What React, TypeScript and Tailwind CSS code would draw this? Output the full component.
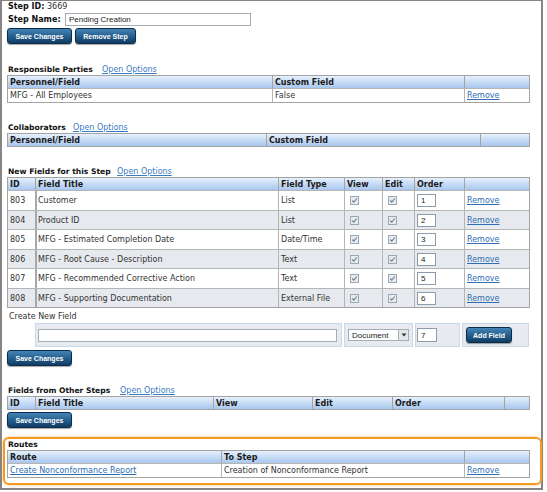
import React from "react";

const HDR = "bg-linear-to-b from-[#e6f0fc] to-[#a9c7ee]";
const LINK = "text-[#2f6db5] underline";
const BTN =
  "flex items-center justify-center h-[16px] rounded-[3px] border border-[#0b2d4c] bg-linear-to-b from-[#4285b6] to-[#0f3d66] text-white font-bold text-[7px] font-['Liberation_Sans',Arial,sans-serif] shadow-[0_1px_1px_rgba(0,0,0,0.35)]";

type Col = { w: number; label: string; thick?: boolean };

function Check() {
  return (
    <span className="inline-flex w-[9px] h-[9px] border border-[#9ba7b3] bg-[#e6ebf0] items-center justify-center">
      <svg width="7" height="7" viewBox="0 0 7 7">
        <path d="M1.3 3.5 L2.8 5.1 L5.8 1.5" stroke="#6f7e8e" strokeWidth="1.1" fill="none" />
      </svg>
    </span>
  );
}

function Table({
  cols,
  rows,
  rowH,
  zebra,
}: {
  cols: Col[];
  rows: React.ReactNode[][];
  rowH?: number[];
  zebra?: boolean;
}) {
  return (
    <div className="w-[523px] border border-[#a3a3a3]">
      <div className={`flex h-[12px] ${HDR}`}>
        {cols.map((c, i) => (
          <div
            key={i}
            className={`flex items-center pl-[2px] font-bold text-[#1a1a1a] whitespace-nowrap overflow-hidden ${
              i > 0 ? "border-l border-[#a3a3a3]" : ""
            }`}
            style={{ width: c.w }}
          >
            {c.label}
          </div>
        ))}
      </div>
      {rows.map((r, ri) => (
        <div
          key={ri}
          className={`flex border-t border-[#b5b5b5] ${zebra && ri % 2 === 1 ? "bg-[#e6e9ed]" : "bg-white"}`}
          style={{ height: (rowH ? rowH[ri] : 13) + 1 }}
        >
          {r.map((cell, ci) => (
            <div
              key={ci}
              className={`flex items-center whitespace-nowrap overflow-hidden ${
                ci > 0
                  ? cols[ci].thick
                    ? "border-l-2 border-[#a8a8a8] pl-[1px]"
                    : "border-l border-[#b5b5b5] pl-[2px]"
                  : "pl-[2px]"
              }`}
              style={{ width: cols[ci].w }}
            >
              {cell}
            </div>
          ))}
        </div>
      ))}
    </div>
  );
}

function Title({ text, w, link = true }: { text: string; w: number; link?: boolean }) {
  return (
    <div className="flex h-[11px] items-center whitespace-nowrap">
      <span className="font-bold text-[#111] pl-[1px] text-[7.6px]" style={{ width: w }}>
        {text}
      </span>
      {link && <span className="text-[#3a7cc2] underline">Open Options</span>}
    </div>
  );
}

function OrderInput({ v }: { v: string }) {
  return (
    <div className="w-[19px] h-[13px] border border-[#8e9caa] bg-white flex items-center pl-[3px] font-['Liberation_Sans',Arial,sans-serif] text-[8px] text-[#222]">
      {v}
    </div>
  );
}

export default function App() {
  const fields = [
    ["803", "Customer", "List", "1"],
    ["804", "Product ID", "List", "2"],
    ["805", "MFG - Estimated Completion Date", "Date/Time", "3"],
    ["806", "MFG - Root Cause - Description", "Text", "4"],
    ["807", "MFG - Recommended Corrective Action", "Text", "5"],
    ["808", "MFG - Supporting Documentation", "External File", "6"],
  ];
  const fieldCols: Col[] = [
    { w: 27, label: "ID" },
    { w: 243, label: "Field Title", thick: true },
    { w: 66, label: "Field Type" },
    { w: 38, label: "View" },
    { w: 32, label: "Edit" },
    { w: 50, label: "Order" },
    { w: 65, label: "" },
  ];
  return (
    <div className="w-[543px] h-[490px] border-l-2 border-t border-r-2 border-b-2 border-[#858585] pl-[5px] bg-white font-['DejaVu_Sans',Verdana,sans-serif] text-[8px] leading-[11px] text-[#333]">
      <div className="h-[11px] flex items-center whitespace-nowrap">
        <span className="font-bold text-[#111] pl-[1px] w-[40px]">Step ID:</span>
        <span>3669</span>
      </div>
      <div className="h-[14px] flex items-center whitespace-nowrap">
        <span className="font-bold text-[#111] pl-[1px] w-[58px]">Step Name:</span>
        <div className="w-[186px] h-[13px] border border-[#a6adb6] bg-white flex items-center pl-[3px] font-['Liberation_Sans',Arial,sans-serif] text-[8px] text-[#222]">
          Pending Creation
        </div>
      </div>
      <div className="flex gap-[3px] mt-[2px]">
        <div className={`${BTN} w-[65px]`}>Save Changes</div>
        <div className={`${BTN} w-[61px]`}>Remove Step</div>
      </div>

      <div className="mt-[20px]">
        <Title text="Responsible Parties" w={95} />
      </div>
      <Table
        cols={[
          { w: 264, label: "Personnel/Field" },
          { w: 192, label: "Custom Field" },
          { w: 65, label: "" },
        ]}
        rows={[["MFG - All Employees", "False", <span className={LINK}>Remove</span>]]}
      />

      <div className="mt-[19px]">
        <Title text="Collaborators" w={66} />
      </div>
      <Table
        cols={[
          { w: 258, label: "Personnel/Field" },
          { w: 214, label: "Custom Field" },
          { w: 49, label: "" },
        ]}
        rows={[]}
      />

      <div className="mt-[19px]">
        <Title text="New Fields for this Step" w={110} />
      </div>
      <Table
        cols={fieldCols}
        zebra
        rowH={[19, 18, 19, 18, 19, 18]}
        rows={fields.map((f) => [
          f[0],
          f[1],
          f[2],
          <span className="pl-[3px] flex"><Check /></span>,
          <span className="pl-[3px] flex"><Check /></span>,
          <OrderInput v={f[3]} />,
          <span className={LINK}>Remove</span>,
        ])}
      />
      <div className="mt-[3px] h-[11px] flex items-center pl-[2px]">Create New Field</div>
      <div className="mt-[1px] flex h-[24px]">
        <div className="w-[28px]" />
        <div className="w-[307px] border border-[#c9d8eb] bg-[#e7ebf0] flex items-center pl-[2px]">
          <div className="w-[299px] h-[13px] border border-[#a6adb6] bg-white" />
        </div>
        <div className="ml-[2px] w-[69px] border border-[#c9d8eb] bg-[#e7ebf0] flex items-center pl-[3px]">
          <div className="w-[61px] h-[12px] border border-[#a6adb6] bg-white flex items-center justify-between font-['Liberation_Sans',Arial,sans-serif] text-[8px] text-[#222]">
            <span className="pl-[3px]">Document</span>
            <span className="w-[10px] h-[10px] border-l border-[#a6adb6] bg-[#e3e6ea] flex items-center justify-center">
              <svg width="6" height="4" viewBox="0 0 6 4">
                <path d="M0.5 0.5 L5.5 0.5 L3 3.5 Z" fill="#333" />
              </svg>
            </span>
          </div>
        </div>
        <div className="ml-[2px] w-[45px] border border-[#c9d8eb] bg-[#e7ebf0] flex items-center pl-[1px]">
          <div className="w-[20px] h-[14px] border border-[#8e9caa] bg-white flex items-center pl-[3px] font-['Liberation_Sans',Arial,sans-serif] text-[8px] text-[#222]">
            7
          </div>
        </div>
        <div className="ml-[2px] w-[67px] border border-[#c9d8eb] bg-[#e7ebf0] flex items-center pl-[3px]">
          <div className={`${BTN} w-[46px]`}>Add Field</div>
        </div>
      </div>
      <div className="mt-[3px] flex">
        <div className={`${BTN} w-[65px]`}>Save Changes</div>
      </div>

      <div className="mt-[19px]">
        <Title text="Fields from Other Steps" w={113} />
      </div>
      <Table
        cols={[
          { w: 27, label: "ID" },
          { w: 178, label: "Field Title", thick: true },
          { w: 99, label: "View" },
          { w: 80, label: "Edit" },
          { w: 112, label: "Order" },
          { w: 25, label: "" },
        ]}
        rows={[]}
      />
      <div className="mt-[2px] flex">
        <div className={`${BTN} w-[65px]`}>Save Changes</div>
      </div>

      <div className="mt-[9px] ml-[-4px] w-[539px] border-2 border-[#f39a26] rounded-[6px] shadow-[0_0_3px_rgba(245,160,50,0.7)] pl-[2px] pb-[5px]">
        <Title text="Routes" w={60} link={false} />
        <Table
          cols={[
            { w: 213, label: "Route" },
            { w: 243, label: "To Step" },
            { w: 65, label: "" },
          ]}
          rows={[
            [
              <span className={LINK}>Create Nonconformance Report</span>,
              "Creation of Nonconformance Report",
              <span className={LINK}>Remove</span>,
            ],
          ]}
        />
      </div>
    </div>
  );
}
